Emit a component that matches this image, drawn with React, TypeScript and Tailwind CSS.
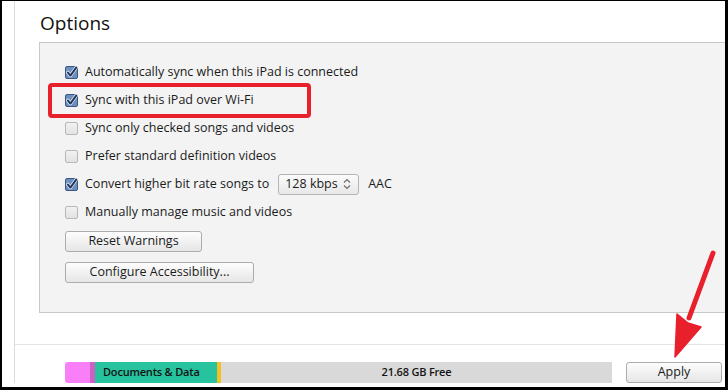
import type { ReactNode } from 'react';

const OPTIONS = [
  { label: 'Automatically sync when this iPad is connected', checked: true },
  { label: 'Sync with this iPad over Wi-Fi', checked: true, highlight: true },
  { label: 'Sync only checked songs and videos', checked: false },
  { label: 'Prefer standard definition videos', checked: false },
  { label: 'Convert higher bit rate songs to', checked: true, bitrate: true },
  { label: 'Manually manage music and videos', checked: false },
];

function CheckBox({ checked }: { checked: boolean }) {
  if (!checked) {
    return (
      <span className="w-[13px] h-[13px] shrink-0 rounded-[2px] border border-[#b8b8b8] bg-gradient-to-b from-[#f2f2f2] to-[#e2e2e2]" />
    );
  }
  return (
    <svg width="13" height="13" viewBox="0 0 13 13" className="shrink-0 overflow-visible">
      <rect x="0.5" y="0.5" width="12" height="12" rx="1.5" fill="#6c8fbd" stroke="#3b5885" />
      <path d="M2.8 6.4 L5.4 9.6 L11.2 1.6" fill="none" stroke="#e9f0f8" strokeWidth="3.4" strokeLinecap="round" strokeLinejoin="round" />
      <path d="M2.8 6.4 L5.4 9.6 L11.2 1.6" fill="none" stroke="#1f3459" strokeWidth="1.9" strokeLinecap="round" strokeLinejoin="round" />
    </svg>
  );
}

function Button({ width, children }: { width: string; children: ReactNode }) {
  return (
    <button
      className={`${width} h-[21px] flex items-center justify-center rounded-[3px] border border-[#acacac] bg-gradient-to-b from-[#fdfdfd] to-[#e6e6e6] text-[12.5px] text-[#1b1b1b] leading-none`}
    >
      {children}
    </button>
  );
}

export default function App() {
  return (
    <div className="relative w-[728px] h-[390px] overflow-hidden bg-white border-t border-l-2 border-r-[3px] border-b-[3px] border-black font-['Open_Sans',sans-serif] text-[#1b1b1b]">
      <div className="ml-[12px] h-[382px] border-l border-[#dcdcdc] flex flex-col">
        {/* Heading */}
        <h2 className="mt-[10px] pl-[25px] text-[19px] leading-[24px] font-normal text-[#111]">Options</h2>

        {/* Options box */}
        <div className="mt-[7px] ml-[24px] h-[271px] border-t border-l border-b border-[#c8c8c8] bg-[#f3f3f3] pl-[25px] pt-[15px] flex flex-col">
          {OPTIONS.map((opt) => (
            <div key={opt.label} className="h-[28px] flex items-center gap-[7px] text-[12.5px]">
              <CheckBox checked={opt.checked} />
              <span className="leading-none">{opt.label}</span>
              {opt.bitrate && (
                <div className="flex items-center ml-[2px] gap-[9px]">
                  <div className="w-[81px] h-[21px] flex items-center justify-between pl-[6px] pr-[7px] rounded-[3px] border border-[#b4b4b4] bg-gradient-to-b from-[#fbfbfb] to-[#e8e8e8]">
                    <span className="leading-none">128 kbps</span>
                    <svg width="8" height="12" viewBox="0 0 8 12">
                      <path d="M1 4.5 L4 1.5 L7 4.5 M1 7.5 L4 10.5 L7 7.5" fill="none" stroke="#6b6b6b" strokeWidth="1.1" />
                    </svg>
                  </div>
                  <span className="leading-none">AAC</span>
                </div>
              )}
            </div>
          ))}
          <div className="mt-[5px] flex flex-col gap-[10px]">
            <Button width="w-[137px]">Reset Warnings</Button>
            <Button width="w-[189px]">Configure Accessibility...</Button>
          </div>
        </div>

        {/* Storage + Apply */}
        <div className="mt-[31px] border-t border-[#e3e3e3] pt-[17px] pl-[50px] flex items-center gap-[14px]">
          <div className="w-[547px] h-[21px] flex rounded-l-[3px] overflow-hidden text-[11px] tracking-[-0.2px] font-semibold text-[#141414]">
            <div className="w-[25px] bg-[#f97ff8]" />
            <div className="w-[5px] bg-[#cf61c4]" />
            <div className="w-[122px] bg-[#27c29e] flex items-center pl-[8px] whitespace-nowrap">Documents &amp; Data</div>
            <div className="w-[4px] bg-[#f6c024]" />
            <div className="flex-1 bg-[#d9d9d9] flex items-center justify-center">21.68 GB Free</div>
          </div>
          <Button width="w-[96px]">Apply</Button>
        </div>
      </div>

      {/* Highlight rectangle */}
      <div className="absolute left-[46px] top-[82px] w-[263px] h-[35px] rounded-[4px] border-[4px] border-[#e8202b]" />

      {/* Red arrow */}
      <svg className="absolute left-0 top-0" width="728" height="390" viewBox="0 0 728 390">
        <g transform="translate(-2 -1)">
          <line x1="713" y1="253" x2="689" y2="318" stroke="#e8202b" strokeWidth="5" strokeLinecap="round" />
          <polygon points="675,357 677,314 688,323 701,327" fill="#e8202b" stroke="#e8202b" strokeWidth="1.5" strokeLinejoin="round" />
        </g>
      </svg>
    </div>
  );
}
